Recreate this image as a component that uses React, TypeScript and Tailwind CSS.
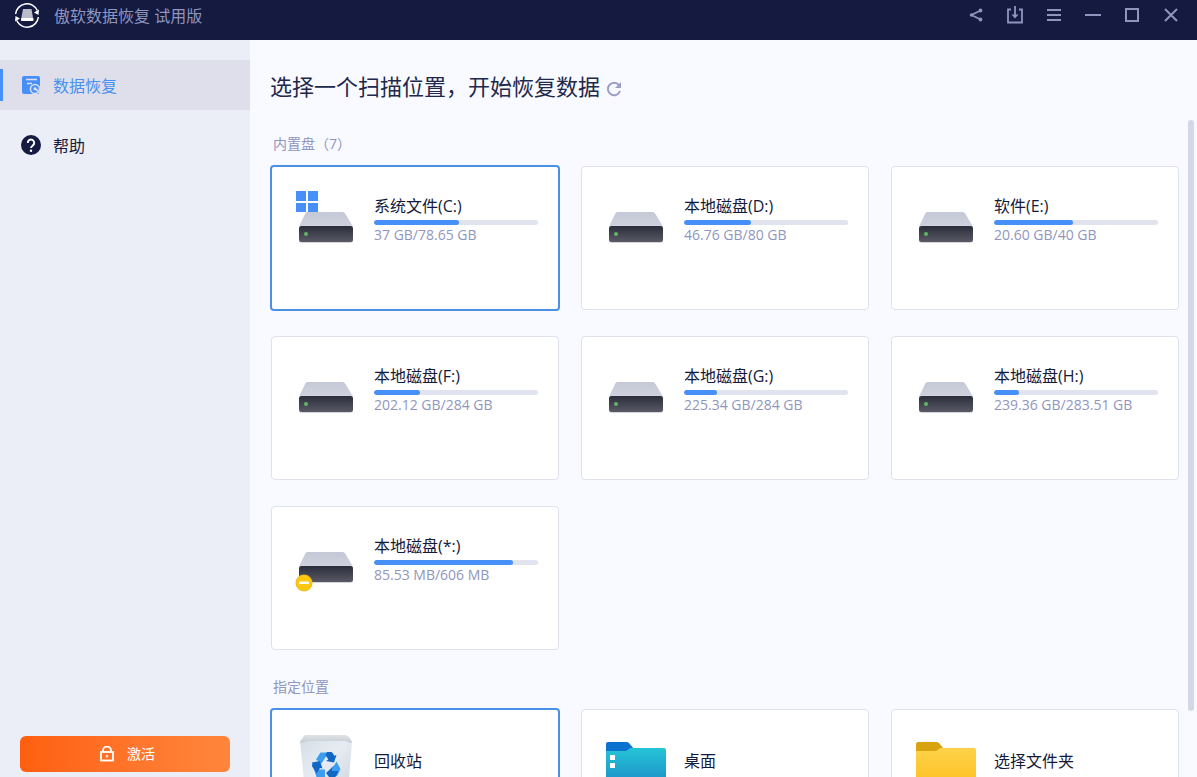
import React, { useState } from "react";
import clsx from "clsx";

type IconKind = "drive" | "system" | "locked" | "recycle" | "desktop" | "folder";

interface Disk {
  id: string;
  name: string;
  usage: string;
  percent: number;
  icon: IconKind;
}

const disks: Disk[] = [
  { id: "c", name: "系统文件(C:)", usage: "37 GB/78.65 GB", percent: 52, icon: "system" },
  { id: "d", name: "本地磁盘(D:)", usage: "46.76 GB/80 GB", percent: 41, icon: "drive" },
  { id: "e", name: "软件(E:)", usage: "20.60 GB/40 GB", percent: 48, icon: "drive" },
  { id: "f", name: "本地磁盘(F:)", usage: "202.12 GB/284 GB", percent: 28, icon: "drive" },
  { id: "g", name: "本地磁盘(G:)", usage: "225.34 GB/284 GB", percent: 20, icon: "drive" },
  { id: "h", name: "本地磁盘(H:)", usage: "239.36 GB/283.51 GB", percent: 15, icon: "drive" },
  { id: "x", name: "本地磁盘(*:)", usage: "85.53 MB/606 MB", percent: 85, icon: "locked" },
];

const places: { id: string; name: string; icon: IconKind }[] = [
  { id: "recycle", name: "回收站", icon: "recycle" },
  { id: "desktop", name: "桌面", icon: "desktop" },
  { id: "folder", name: "选择文件夹", icon: "folder" },
];

function DriveShape({ led }: { led: boolean }) {
  return (
    <>
      <defs>
        <linearGradient id="driveTop" x1="0" y1="0" x2="0" y2="1">
          <stop offset="0" stopColor="#c5c8d6" />
          <stop offset="1" stopColor="#cfd1de" />
        </linearGradient>
        <linearGradient id="driveFront" x1="0" y1="0" x2="0" y2="1">
          <stop offset="0" stopColor="#2b2d3b" />
          <stop offset="1" stopColor="#5a5a66" />
        </linearGradient>
      </defs>
      <path d="M12 22h34c1.500 0 2.600.6 3.300 1.800L57 36.500H3L9.200 23.800C9.800 22.600 10.700 22 12 22z" fill="url(#driveTop)" />
      <rect x="3" y="35" width="54" height="18" rx="3" fill="#d3d4de" />
      <rect x="3" y="36" width="54" height="16" rx="2.500" fill="url(#driveFront)" />
      {led && <circle cx="10" cy="44" r="2" fill="#62b565" />}
    </>
  );
}

function FolderShape({ id, tab, from, to }: { id: string; tab: string; from: string; to: string }) {
  return (
    <>
      <defs>
        <linearGradient id={id} x1="0" y1="0" x2="0" y2="1">
          <stop offset="0" stopColor={from} />
          <stop offset="1" stopColor={to} />
        </linearGradient>
      </defs>
      <path d="M0 11a2 2 0 0 1 2-2h18c1.500 0 2.500.5 3.400 1.500L28 16v6H0z" fill={tab} />
      <path d="M0 18h18c2 0 3-.4 4.300-1.500C23.500 15.400 24.500 15 26 15h32a2 2 0 0 1 2 2v40a4 4 0 0 1-4 4H4a4 4 0 0 1-4-4z" fill={`url(#${id})`} />
    </>
  );
}

function LocationIcon({ kind }: { kind: IconKind }) {
  return (
    <svg className="h-16 w-[60px] shrink-0 overflow-visible" viewBox="0 0 60 64" aria-hidden="true">
      {kind === "drive" && <DriveShape led />}
      {kind === "system" && (
        <>
          <DriveShape led />
          <path d="M0 1h10v10H0zM12 1h10v10H12zM0 13h10v9H0zM12 13h10v9H12z" fill="#478ff9" />
        </>
      )}
      {kind === "locked" && (
        <>
          <DriveShape led={false} />
          <circle cx="8" cy="53" r="8.500" fill="#efb81c" />
          <circle cx="8" cy="53" r="7.500" fill="#fcc910" />
          <rect x="3" y="51.500" width="10" height="2.500" rx="1" fill="#fff" />
        </>
      )}
      {kind === "recycle" && (
        <>
          <defs>
            <linearGradient id="bin" x1="0" y1="0" x2="1" y2="1">
              <stop offset="0" stopColor="#d6dee6" />
              <stop offset=".45" stopColor="#e6ecf2" />
              <stop offset="1" stopColor="#cbd3dc" />
            </linearGradient>
            <linearGradient id="binRim" x1="0" y1="0" x2="0" y2="1">
              <stop offset="0" stopColor="#dfe3e7" />
              <stop offset="1" stopColor="#c7cdd4" />
            </linearGradient>
          </defs>
          <path d="M4 8h52l-4 50a4 4 0 0 1-4 4H13a4 4 0 0 1-4-4z" fill="url(#bin)" />
          <path d="M10 2h39c1.500 0 2.500.5 3.400 1.600L56 8.500c-.3 1-1 1.500-2.200 1.500L49 8H12L6 10c-1.200 0-2-.5-2-1.500l3.400-4.900C8.200 2.500 8.800 2 10 2z" fill="url(#binRim)" />
          {/* Recycling arrows: light bands with darker folds */}
          <path d="M24.500 19.500h8.500L29 25l-3.500 5.500-5.500-4z" fill="#3d9cf0" />
          <path d="M40.500 28.500 44.500 36l-3.500 7h-5.500l-.5-8 3.500-3z" fill="#3d9cf0" />
          <path d="M18 36.500h11v8.500h-6.500c-1 0-1.700-.5-2.200-1.500z" fill="#3d9cf0" />
          <path d="M31 19h3.500c1.200 0 2 .5 2.500 1.500l1.300 2.300 2.200-.8-2.500 7.500-8-1.500 2.300-1.600L29.500 22z" fill="#1068c4" />
          <path d="m16 29.500 8-1.500 2.500 7.500-2.500-.5-3.300 5.500-4.500-7c-.4-.8-.2-1.500.2-2.200z" fill="#1068c4" />
          <path d="m30 40 6-5.500V38h6.500l-2.800 5.500c-.5 1-1.200 1.500-2.200 1.500H36v3z" fill="#1068c4" />
        </>
      )}
      {kind === "desktop" && (
        <>
          <FolderShape id="deskFolder" tab="#0c72cf" from="#25c4d6" to="#1a7fc4" />
          <path d="M4 22h5v5H4zM4 30h5v5H4z" fill="#fff" />
        </>
      )}
      {kind === "folder" && <FolderShape id="openFolder" tab="#d9a20f" from="#fdd24a" to="#ffbd17" />}
    </svg>
  );
}

interface LocationCardProps {
  name: string;
  icon: IconKind;
  usage?: string;
  percent?: number;
  active: boolean;
  onSelect: () => void;
}

function LocationCard({ name, icon, usage, percent, active, onSelect }: LocationCardProps) {
  return (
    <button
      type="button"
      onClick={onSelect}
      className={clsx(
        "flex items-start gap-[18px] rounded bg-white pt-[23px] pr-5 pb-[55px] pl-6 text-left",
        active ? "border-2 border-[#4a90e8]" : "m-px border border-[#dfe1ee]"
      )}
    >
      <LocationIcon kind={icon} />
      {usage ? (
        <span className="block min-w-0 flex-1 pt-1">
          <span className="block truncate text-base leading-6 text-[#141a3c]">{name}</span>
          <span className="mt-0.5 block h-[5px] overflow-hidden rounded-full bg-[#e1e4ee]">
            <span className="block h-full rounded-full bg-[#478ff9]" style={{ width: `${percent}%` }} />
          </span>
          <span className="block truncate text-sm leading-5 text-[#9096bd]">{usage}</span>
        </span>
      ) : (
        <span className="block min-w-0 flex-1 truncate pt-4 text-base leading-6 text-[#141a3c]">{name}</span>
      )}
    </button>
  );
}

function TitleBar() {
  const button = "flex h-[30px] w-[39px] items-center justify-center";
  return (
    <header className="flex h-10 shrink-0 items-start bg-[#141a40] pr-[7px] pl-3.5 text-[#8f95bf]">
      <div className="flex h-8 items-center gap-3.5">
        <svg className="h-[26px] w-[26px]" viewBox="0 0 26 26" fill="none" aria-hidden="true">
          <path d="M1.600 11A11.400 11.400 0 0 1 23.300 7.500M24.400 14A11.400 11.400 0 0 1 2.700 17.500" stroke="#fff" strokeWidth="1.500" />
          <path d="m25 6.500-.5 5.500-4.500-2.500zM1 18.500l.5-5.500L6 15.500z" fill="#fff" />
          <path d="M9 6h8.500l1.500 9H7.300z" fill="#b9bbc9" />
          <rect x="7" y="15" width="12.500" height="3" rx=".8" fill="#fff" />
        </svg>
        <h1 className="text-base leading-6">傲软数据恢复 试用版</h1>
      </div>
      <div className="ml-auto flex">
        <button type="button" aria-label="分享" className={button}>
          <svg className="h-4 w-4" viewBox="0 0 16 16" fill="none" stroke="currentColor" strokeWidth="1.800">
            <path d="M12.500 3.500 3.500 8l9 4.500" />
            <circle cx="12.500" cy="3.500" r="1" fill="currentColor" />
            <circle cx="12.500" cy="12.500" r="1" fill="currentColor" />
            <circle cx="3.500" cy="8" r=".8" fill="currentColor" />
          </svg>
        </button>
        <button type="button" aria-label="导入" className={button}>
          <svg className="h-[18px] w-[18px]" viewBox="0 0 18 18" fill="none" stroke="currentColor" strokeWidth="1.800">
            <path d="M5 3.500H2v13h14v-13h-3M9 0v11" />
            <path d="M5.500 8.500h7L9 12.500z" fill="currentColor" stroke="none" />
          </svg>
        </button>
        <button type="button" aria-label="菜单" className={button}>
          <svg className="h-4 w-4" viewBox="0 0 16 16" fill="none" stroke="currentColor" strokeWidth="2">
            <path d="M1 3h14M1 8h14M1 13h14" />
          </svg>
        </button>
        <button type="button" aria-label="最小化" className={button}>
          <svg className="h-4 w-4" viewBox="0 0 16 16" stroke="currentColor" strokeWidth="2">
            <path d="M0 8h16" />
          </svg>
        </button>
        <button type="button" aria-label="最大化" className={button}>
          <svg className="h-4 w-4" viewBox="0 0 16 16" fill="none" stroke="currentColor" strokeWidth="2">
            <path d="M2 2h12v12H2z" />
          </svg>
        </button>
        <button type="button" aria-label="关闭" className={button}>
          <svg className="h-4 w-4" viewBox="0 0 16 16" stroke="currentColor" strokeWidth="2">
            <path d="m2 2 12 12M14 2 2 14" />
          </svg>
        </button>
      </div>
    </header>
  );
}

function Sidebar() {
  return (
    <aside className="flex w-[250px] shrink-0 flex-col bg-[#ebedf7] pt-5 pb-[5px]">
      <nav className="flex flex-col gap-2.5">
        <a href="#recover" className="flex h-[50px] items-center bg-[#dedfeb] text-[#478ff0]">
          <span className="h-8 w-[3px] bg-[#478ff9]" />
          <svg className="ml-[18px] h-5 w-5" viewBox="0 0 20 20" fill="none" aria-hidden="true">
            <rect x="1" y="1" width="18" height="18" rx="2" fill="#478ff9" />
            <path d="M5 4.500h11M6 8.500h5" stroke="#dedfeb" strokeWidth="1.600" />
            <circle cx="14" cy="14" r="5.300" fill="#dedfeb" />
            <circle cx="14" cy="14" r="3.800" fill="#478ff9" />
            <circle cx="14" cy="13.800" r="1.600" fill="#dedfeb" />
            <path d="m15 14 5 5.500" stroke="#dedfeb" strokeWidth="1.800" />
          </svg>
          <span className="ml-3 pt-0.5 text-base leading-6">数据恢复</span>
        </a>
        <a href="#help" className="flex h-[50px] items-center pl-[21px] text-[#141a40]">
          <svg className="h-5 w-5" viewBox="0 0 20 20" fill="none" aria-hidden="true">
            <circle cx="10" cy="10" r="10" fill="#141a40" />
            <path d="M6.800 8a3.200 3.200 0 1 1 5 2.400c-1.100.8-1.800 1.300-1.800 2.700" stroke="#fff" strokeWidth="1.900" />
            <circle cx="10" cy="15.700" r="1.200" fill="#fff" />
          </svg>
          <span className="ml-3 pt-0.5 text-base leading-6">帮助</span>
        </a>
      </nav>
      <button
        type="button"
        className="mx-5 mt-auto flex h-9 items-center justify-center gap-3 rounded-md bg-linear-to-r from-[#ff5f0d] to-[#ff863c] pl-1 text-sm text-white"
      >
        <svg className="h-4 w-4" viewBox="0 0 16 16" fill="none" stroke="currentColor" strokeWidth="1.800" aria-hidden="true">
          <rect x="2" y="6" width="12" height="8.500" />
          <path d="M4 6V4.500a4 4 0 0 1 8 0V6" />
          <circle cx="8" cy="10.300" r=".4" />
        </svg>
        激活
      </button>
    </aside>
  );
}

export default function App() {
  const [disk, setDisk] = useState("c");
  const [place, setPlace] = useState("recycle");

  return (
    <div className="flex h-screen flex-col overflow-hidden bg-[#f9faff] font-['Open_Sans','Noto_Sans_CJK_SC',sans-serif]">
      <TitleBar />
      <div className="flex min-h-0 flex-1">
        <Sidebar />
        <main className="flex min-w-0 flex-1 flex-col pl-5">
          <div className="flex h-20 shrink-0 items-center gap-1.5 pt-3">
            <h2 className="text-[22px] leading-8 text-[#22284c]">选择一个扫描位置，开始恢复数据</h2>
            <button type="button" aria-label="刷新" className="pt-1.5 text-[#9a9dc4]">
              <svg className="h-4 w-4" viewBox="0 0 16 16" fill="none" stroke="currentColor" strokeWidth="2" aria-hidden="true">
                <path d="M13 4.200A6.200 6.200 0 1 0 14 10" />
                <path d="M15 1v6H9z" fill="currentColor" stroke="none" />
              </svg>
            </button>
          </div>

          <div className="flex min-h-0 flex-1 gap-2 pr-[3px]">
            <div className="flex min-w-0 flex-1 flex-col gap-[26px] overflow-hidden pt-3.5">
              {/* Built-in disks */}
              <section>
                <h3 className="mb-[11px] pl-[3px] text-sm leading-5 text-[#9096bd]">内置盘（7）</h3>
                <div className="grid grid-cols-3 gap-x-5 gap-y-6">
                  {disks.map((item) => (
                    <LocationCard
                      key={item.id}
                      name={item.name}
                      icon={item.icon}
                      usage={item.usage}
                      percent={item.percent}
                      active={disk === item.id}
                      onSelect={() => setDisk(item.id)}
                    />
                  ))}
                </div>
              </section>

              {/* Specific locations */}
              <section>
                <h3 className="mb-[11px] pl-[3px] text-sm leading-5 text-[#9096bd]">指定位置</h3>
                <div className="grid grid-cols-3 gap-x-5 gap-y-6">
                  {places.map((item) => (
                    <LocationCard
                      key={item.id}
                      name={item.name}
                      icon={item.icon}
                      active={place === item.id}
                      onSelect={() => setPlace(item.id)}
                    />
                  ))}
                </div>
              </section>
            </div>
            {/* Scroll thumb */}
            <div className="h-9/10 w-1.5 shrink-0 rounded-full bg-[#d3d8e8]" />
          </div>
        </main>
      </div>
    </div>
  );
}
